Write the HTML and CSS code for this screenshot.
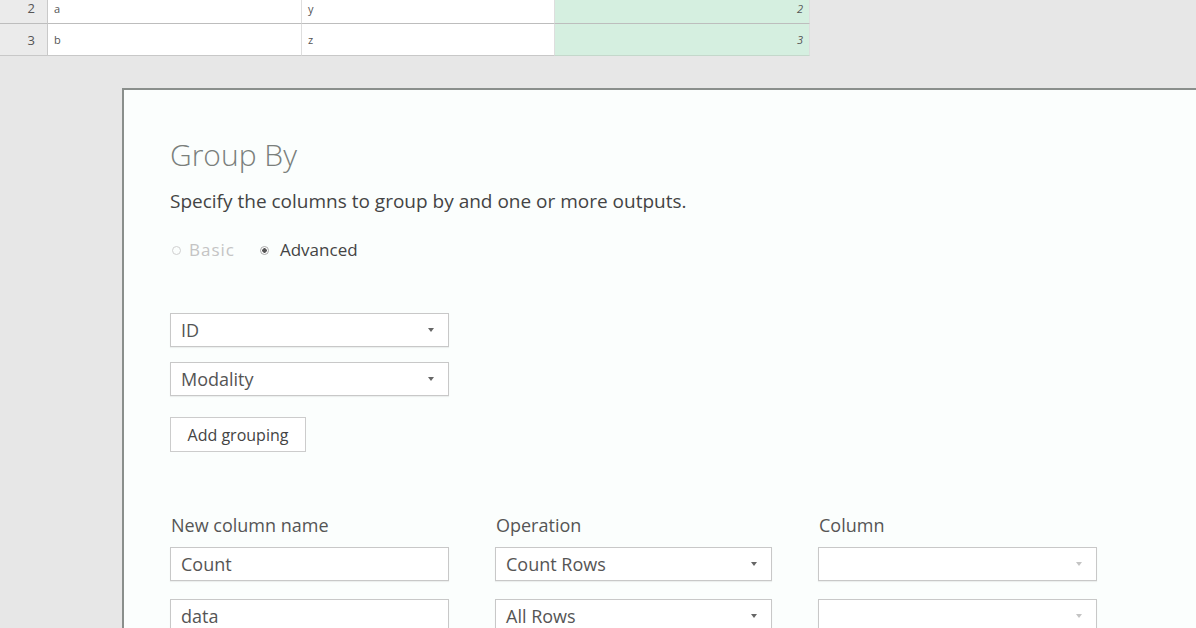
FILE: index.html
```html
<!DOCTYPE html>
<html>
<head>
<meta charset="utf-8">
<link rel="stylesheet" href="styles.css">
</head>
<body>
<div class="sheet">
  <div class="row">
    <div class="rh">2</div>
    <div class="cell">a</div>
    <div class="cell">y</div>
    <div class="cell num">2</div>
  </div>
  <div class="row">
    <div class="rh">3</div>
    <div class="cell">b</div>
    <div class="cell">z</div>
    <div class="cell num">3</div>
  </div>
</div>
<div class="dialog">
  <h1 class="title">Group By</h1>
  <p class="desc">Specify the columns to group by and one or more outputs.</p>
  <div class="radios">
    <label class="radio disabled"><span class="dot"></span>Basic</label>
    <label class="radio"><span class="dot on"></span>Advanced</label>
  </div>
  <div class="groups">
    <div class="select"><span>ID</span><span class="arrow"></span></div>
    <div class="select"><span>Modality</span><span class="arrow"></span></div>
    <button class="btn">Add grouping</button>
  </div>
  <div class="outputs">
    <div class="lbl">New column name</div>
    <div class="lbl">Operation</div>
    <div class="lbl">Column</div>
    <div class="input">Count</div>
    <div class="select"><span>Count Rows</span><span class="arrow"></span></div>
    <div class="select"><span></span><span class="arrow faint"></span></div>
    <div class="input">data</div>
    <div class="select"><span>All Rows</span><span class="arrow"></span></div>
    <div class="select"><span></span><span class="arrow faint"></span></div>
  </div>
</div>
</body>
</html>
```
FILE: styles.css
```css
html, body {
  margin: 0;
  padding: 0;
}
body {
  width: 1196px;
  height: 628px;
  overflow: hidden;
  background: #e7e7e7;
  font-family: "Open Sans", "Noto Sans", sans-serif;
  color: #444;
}
.sheet {
  padding-top: 1px;
  margin-top: -10px;
  display: flex;
  flex-direction: column;
  width: 811px;
}
.row {
  display: grid;
  grid-template-columns: 48px 254px 253px 255px;
  height: 33px;
}
.row + .row .rh,
.row + .row .cell {
  border-top: 1px solid #bdbdbd;
  height: 33px;
  line-height: 32px;
}
.row + .row {
  margin-top: -1px;
}
.rh, .cell {
  box-sizing: border-box;
  border-bottom: 1px solid #c8c8c8;
}
.rh {
  background: #ebebeb;
  border-right: 1px solid #c9c9c9;
  font-size: 13px;
  color: #555;
  text-align: right;
  padding-right: 12px;
  line-height: 35px;
}
.cell {
  background: #fff;
  border-right: 1px solid #dedede;
  font-size: 11px;
  color: #555;
  padding-left: 6px;
  line-height: 35px;
}
.cell.num {
  background: #d5efe0;
  border-top-color: #bcd3c4;
  border-bottom-color: #c4d8cb;
  text-align: right;
  padding-right: 6px;
  font-style: italic;
}
.dialog {
  margin: 32px 0 0 122px;
  width: 1100px;
  height: 560px;
  background: #fbfefd;
  border-top: 2px solid #8a8f8c;
  border-left: 2px solid #8a8f8c;
  padding: 45px 0 0 46px;
  box-sizing: border-box;
}
.title {
  margin: 0;
  font-size: 30px;
  font-weight: 300;
  color: #7a7f7c;
  line-height: 40px;
}
.desc {
  margin: 13px 0 0;
  font-size: 19px;
  color: #444;
  line-height: 26px;
}
.radios {
  display: flex;
  gap: 25px;
  margin-top: 24px;
  font-size: 17px;
  line-height: 24px;
}
.radio {
  display: flex;
  align-items: center;
  gap: 11px;
}
.radio.disabled {
  color: #c4c4c4;
  letter-spacing: 1px;
  margin-left: 2px;
  gap: 8px;
}
.dot {
  width: 9px;
  height: 9px;
  border: 1px solid #d0d0d0;
  border-radius: 50%;
  box-sizing: border-box;
}
.dot.on {
  border-color: #aaa;
  background: radial-gradient(circle, #555 0 2px, #fff 2.5px);
}
.groups {
  margin-top: 51px;
  display: flex;
  flex-direction: column;
  align-items: flex-start;
  gap: 15px;
}
.groups .select {
  width: 279px;
}
.select, .input {
  height: 34px;
  box-sizing: border-box;
  border: 1px solid #c8c8c8;
  background: #fff;
  display: flex;
  align-items: center;
  justify-content: space-between;
  padding: 0 14px 0 10px;
  font-size: 18px;
  color: #555;
  box-shadow: 0 1px 1px rgba(0,0,0,0.06);
}
.arrow {
  width: 0;
  height: 0;
  border-left: 3px solid transparent;
  border-right: 3px solid transparent;
  border-top: 4px solid #666;
}
.arrow.faint {
  border-top-color: #c4c4c4;
}
.btn {
  margin-top: 6px;
  height: 35px;
  width: 136px;
  background: #fff;
  border: 1px solid #ccc;
  font-family: inherit;
  font-size: 16px;
  color: #444;
  padding: 0;
}
.outputs {
  margin-top: 61px;
  display: grid;
  grid-template-columns: 279px 277px 279px;
  column-gap: 46px;
  row-gap: 18px;
}
.outputs .lbl {
  font-size: 18px;
  color: #555;
  line-height: 24px;
  margin-bottom: -8px;
  padding-left: 1px;
}
```
